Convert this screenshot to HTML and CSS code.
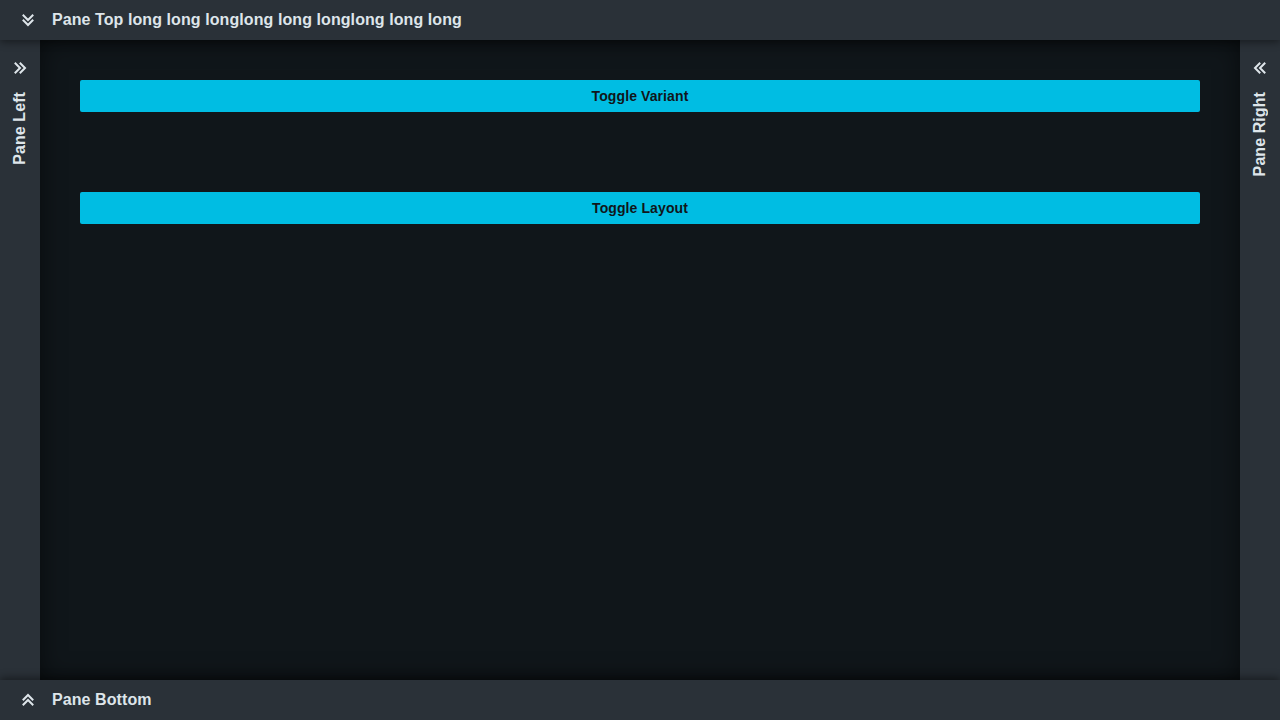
FILE: index.html
```html
<!DOCTYPE html>
<html>
<head>
<meta charset="utf-8">
<link rel="stylesheet" href="styles.css">
</head>
<body>
<div class="app">
  <header class="pane pane-top">
    <svg class="icon" viewBox="0 0 16 16"><path d="M3.5 3.5 L8 8 L12.5 3.5 M3.5 8.5 L8 13 L12.5 8.5"/></svg>
    <span class="title">Pane Top long long longlong long longlong long long</span>
  </header>
  <div class="middle">
    <aside class="pane pane-side">
      <svg class="icon" viewBox="0 0 16 16"><path d="M3.5 3.5 L8 8 L3.5 12.5 M8.5 3.5 L13 8 L8.5 12.5"/></svg>
      <span class="vtitle">Pane Left</span>
    </aside>
    <main class="content">
      <button class="btn">Toggle Variant</button>
      <button class="btn">Toggle Layout</button>
    </main>
    <aside class="pane pane-side">
      <svg class="icon" viewBox="0 0 16 16"><path d="M12.5 3.5 L8 8 L12.5 12.5 M7.5 3.5 L3 8 L7.5 12.5"/></svg>
      <span class="vtitle">Pane Right</span>
    </aside>
  </div>
  <footer class="pane pane-bottom">
    <svg class="icon" viewBox="0 0 16 16"><path d="M3.5 12.5 L8 8 L12.5 12.5 M3.5 7.5 L8 3 L12.5 7.5"/></svg>
    <span class="title">Pane Bottom</span>
  </footer>
</div>
</body>
</html>
```
FILE: styles.css
```css
html, body {
  margin: 0;
  padding: 0;
  height: 100%;
  background: #10161a;
  font-family: "Liberation Sans", Arial, sans-serif;
}
.app {
  display: flex;
  flex-direction: column;
  height: 720px;
  width: 1280px;
}
.pane {
  background: #2a3138;
  color: #dee5ea;
  font-weight: bold;
  font-size: 16px;
  letter-spacing: 0.08px;
}
.pane-top, .pane-bottom {
  height: 40px;
  flex: 0 0 40px;
  display: flex;
  align-items: center;
  padding-left: 20px;
  gap: 16px;
  box-sizing: border-box;
  position: relative;
  z-index: 2;
}
.pane-top { box-shadow: 0 2px 8px rgba(0,0,0,0.45); }
.pane-bottom { box-shadow: 0 -2px 8px rgba(0,0,0,0.45); }
.icon {
  width: 16px;
  height: 16px;
  flex: 0 0 16px;
  fill: none;
  stroke: #dee5ea;
  stroke-width: 2;
  stroke-linecap: square;
}
.middle {
  flex: 1;
  display: flex;
  min-height: 0;
}
.pane-side {
  width: 40px;
  flex: 0 0 40px;
  display: flex;
  flex-direction: column;
  align-items: center;
  padding-top: 20px;
  gap: 16px;
  box-sizing: border-box;
}
.vtitle {
  writing-mode: vertical-rl;
  transform: rotate(180deg);
  line-height: 16px;
}
.content {
  flex: 1;
  background: #10161a;
  box-shadow: inset 0 0 24px rgba(0,0,0,0.55);
  padding: 40px;
  display: flex;
  flex-direction: column;
  gap: 80px;
}
.btn {
  height: 32px;
  border: none;
  border-radius: 2px;
  background: #00bde3;
  color: #10161a;
  font-family: "Liberation Sans", Arial, sans-serif;
  font-weight: bold;
  font-size: 14px;
  letter-spacing: 0.1px;
  padding: 0;
}
```
